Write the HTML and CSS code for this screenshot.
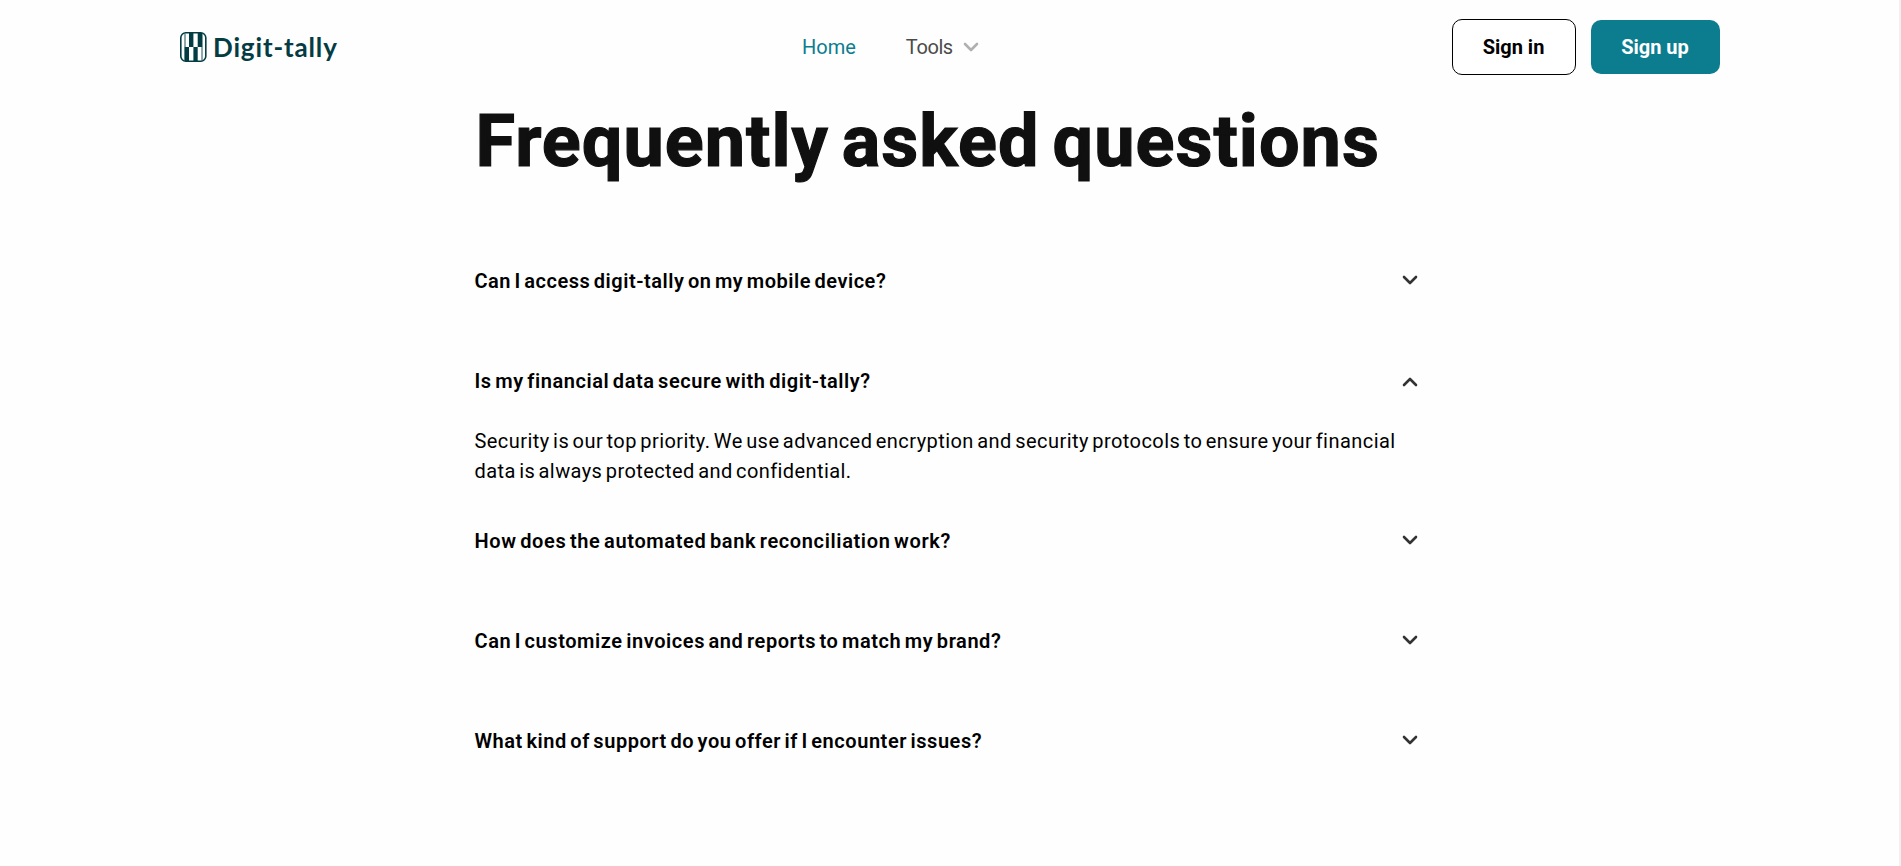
FILE: index.html
```html
<!DOCTYPE html>
<html lang="en">
<head>
<meta charset="utf-8">
<title>Digit-tally</title>
<link rel="stylesheet" href="styles.css">
</head>
<body>
<header class="header">
  <a class="logo">
    <svg class="logo-mark" width="27" height="30" viewBox="0 0 27 30">
      <rect x=".8" y=".8" width="25" height="28.400" rx="5" fill="#fff" stroke="#033c43" stroke-width="1.600"/>
      <path d="M9 1h4.400v14H9zM17.700 1h4.400v14h-4.400zM4.700 15H9v14H4.700zM13.400 15h4.300v14h-4.300z" fill="#033c43"/>
      <path d="M5 1.500v27M22 1.500v27" stroke="#033c43" stroke-width=".9" fill="none"/>
    </svg>
    <span class="logo-text">Digit-tally</span>
  </a>
  <nav class="nav">
    <a class="nav-link active">Home</a>
    <a class="nav-link"><span class="nav-tools">Tools</span>
      <svg class="nav-chevron" width="16" height="10" viewBox="0 0 16 10"><path d="M2 2l6 6 6-6"/></svg>
    </a>
  </nav>
  <div class="actions">
    <button class="button outline">Sign in</button>
    <button class="button solid">Sign up</button>
  </div>
</header>
<main class="faq">
  <h1 class="title">Frequently asked questions</h1>
  <section class="item">
    <h2 class="question"><span class="q1">Can I access digit-tally on my mobile device?</span><svg class="chevron" width="16" height="10" viewBox="0 0 16 10"><path d="M2 2l6 6 6-6"/></svg></h2>
  </section>
  <section class="item open">
    <h2 class="question"><span class="q2">Is my financial data secure with digit-tally?</span><svg class="chevron up" width="16" height="10" viewBox="0 0 16 10"><path d="M2 2l6 6 6-6"/></svg></h2>
    <p class="answer"><span class="a1">Security is our top priority. We use advanced encryption and security protocols to ensure your financial</span> <span class="a2">data is always protected and confidential.</span></p>
  </section>
  <section class="item">
    <h2 class="question"><span class="q3">How does the automated bank reconciliation work?</span><svg class="chevron" width="16" height="10" viewBox="0 0 16 10"><path d="M2 2l6 6 6-6"/></svg></h2>
  </section>
  <section class="item">
    <h2 class="question"><span class="q4">Can I customize invoices and reports to match my brand?</span><svg class="chevron" width="16" height="10" viewBox="0 0 16 10"><path d="M2 2l6 6 6-6"/></svg></h2>
  </section>
  <section class="item">
    <h2 class="question"><span class="q5">What kind of support do you offer if I encounter issues?</span><svg class="chevron" width="16" height="10" viewBox="0 0 16 10"><path d="M2 2l6 6 6-6"/></svg></h2>
  </section>
</main>
</body>
</html>
```
FILE: styles.css
```css
* { box-sizing: border-box; }
body {
  margin: 0;
  height: 866px;
  overflow: hidden;
  background: #fefefe;
  border-right: 2px solid #f0f0f0;
  font-family: Roboto, "Liberation Sans", sans-serif;
  font-size: 20px;
  line-height: 30px;
  color: #000;
}
.header {
  display: grid;
  grid-template-columns: 622px 1fr auto;
  align-items: center;
  height: 94px;
  padding: 0 179px 0 180px;
}
.logo { display: flex; align-items: center; gap: 6px; }
.logo-text {
  font-family: Lato, sans-serif;
  font-weight: 700;
  font-size: 26px;
  letter-spacing: .85px;
  color: #033c43;
}
.nav { display: flex; gap: 50px; }
.nav-link { display: flex; align-items: center; color: #4b4b4b; }
.active { color: #0c7d8f; }
.nav-tools { letter-spacing: -.4px; }
.nav-chevron { margin-left: 10px; }
.nav-chevron path { fill: none; stroke: #b0b0b0; stroke-width: 2.6; stroke-linecap: round; stroke-linejoin: round; }
.actions { display: flex; align-items: center; gap: 15px; }
.button {
  font: 700 20px/24px Roboto, sans-serif;
  padding: 0 1px 0 0;
  border-radius: 10px;
}
.outline { width: 124px; height: 56px; background: #fff; border: 1px solid #000; color: #000; }
.solid { width: 129px; height: 54px; background: #0c7d8f; border: 0; color: #fff; }
.faq { width: 944.5px; margin-left: 474.5px; }
.title {
  margin: 0 0 82px;
  height: 90px;
  padding-left: 1px;
  font-size: 72px;
  line-height: 95px;
  font-weight: 700;
  letter-spacing: 1.03px;
  word-spacing: -6px;
  color: #101010;
  -webkit-text-stroke: 1.2px #101010;
  white-space: nowrap;
}
.item { height: 100px; }
.open { height: 160px; }
.question {
  display: flex;
  justify-content: space-between;
  align-items: center;
  height: 30px;
  margin: 0;
  font-size: 20px;
  font-weight: 600;
  word-spacing: -2px;
  white-space: nowrap;
}
.q1 { letter-spacing: .52px; }
.q2 { letter-spacing: .57px; }
.q3 { letter-spacing: .63px; }
.q4 { letter-spacing: .57px; }
.q5 { letter-spacing: .55px; }
.a1 { letter-spacing: .445px; }
.a2 { letter-spacing: .42px; }
.chevron { margin: -2px 1px 0 0; }
.chevron path { fill: none; stroke: #333; stroke-width: 2.6; stroke-linecap: round; stroke-linejoin: round; }
.up { margin-top: 1px; transform: rotate(180deg); }
.answer {
  display: flex;
  flex-direction: column;
  align-items: flex-start;
  margin: 30px 0 0;
  word-spacing: -2px;
  white-space: nowrap;
}
```
